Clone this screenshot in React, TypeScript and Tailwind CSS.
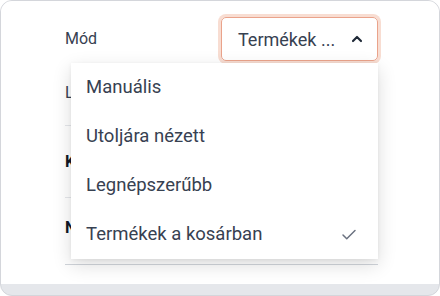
import { Check, ChevronUp } from "lucide-react";

const options = ["Manuális", "Utoljára nézett", "Legnépszerűbb", "Termékek a kosárban"];

export default function App() {
  return (
    <div
      className="w-[440px] h-[296px] overflow-hidden rounded-[12px] border border-[#d4d6db] bg-[#e5e7eb] text-[#374151]"
      style={{ fontFamily: "Roboto, 'Noto Sans', sans-serif" }}
    >
      <div className="relative h-[283px] bg-white pl-[64px] pr-[61px] pt-[16px]">
        {/* mode row */}
        <div className="flex h-[44px] items-center justify-between">
          <span className="text-[16px] text-[#374151]">Mód</span>
          <button className="flex h-[44px] w-[157px] items-center justify-between rounded-[5px] border-[1.5px] border-[#eaa38b] pl-[16px] pr-[12px] ring-[3px] ring-[#f8ddd2]">
            <span className="text-[18px] text-[#374151]">Termékek ...</span>
            <ChevronUp size={16} strokeWidth={3.2} className="text-[#1f2937]" />
          </button>
        </div>

        {/* rows behind the menu */}
        <div className="flex h-[65px] items-center border-b border-[#e5e7eb] text-[16px]">Limit</div>
        <div className="flex h-[72px] items-center border-b border-[#e5e7eb] text-[16px] font-bold text-[#111827]">Kosár</div>
        <div className="flex h-[67px] items-center border-b border-[#d1d5db] pb-[6px] text-[16px] font-bold text-[#111827]">Név</div>

        {/* dropdown menu */}
        <ul className="absolute left-[70px] top-[62px] w-[307px] bg-white shadow-[0_6px_18px_rgba(0,0,0,0.14),0_1px_4px_rgba(0,0,0,0.06)]">
          {options.map((o, i) => (
            <li key={o} className="flex h-[49px] items-center justify-between pl-[15px] pr-[20px] text-[18.5px] text-[#374151]">
              <span>{o}</span>
              {i === 3 && <Check size={18} strokeWidth={2} className="text-[#6b7280]" />}
            </li>
          ))}
        </ul>
      </div>
    </div>
  );
}
